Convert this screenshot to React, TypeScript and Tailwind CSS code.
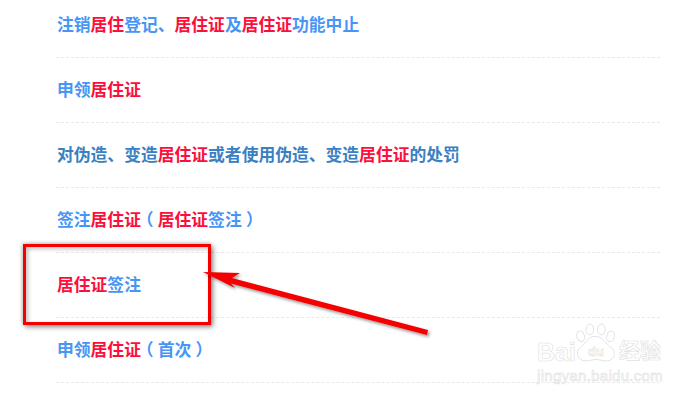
const R = ({ children }: { children: string }) => <span className="text-[#fb0f3c]">{children}</span>;
const Paren = ({ children }: { children: string }) => (
  <span className="inline-block w-[1em] text-center [font-feature-settings:'halt']">{children}</span>
);

const rows = [
  { cls: "text-[#4796f6]", body: <>注销<R>居住</R>登记、<R>居住证</R>及<R>居住证</R>功能中止</> },
  { cls: "text-[#4796f6]", body: <>申领<R>居住证</R></> },
  { cls: "text-[#3a80c2]", body: <>对伪造、变造<R>居住证</R>或者使用伪造、变造<R>居住证</R>的处罚</> },
  { cls: "text-[#4796f6]", body: <>签注<R>居住证</R><Paren>（</Paren><R>居住证</R>签注<Paren>）</Paren></> },
  { cls: "text-[#4796f6]", body: <><R>居住证</R>签注</> },
  { cls: "text-[#4796f6]", body: <>申领<R>居住证</R><Paren>（</Paren>首次<Paren>）</Paren></> },
];

export default function App() {
  return (
    <div className="relative w-[700px] h-[400px] overflow-hidden bg-white font-['Noto_Sans_CJK_SC','Noto_Sans',sans-serif]">
      <ul className="ml-[56px] w-[604px] -mt-[7px]">
        {rows.map((r, i) => (
          <li key={i} className={`pl-px pt-[19px] pb-[21px] border-b border-dashed border-[#e9e9e9] text-[16.8px] leading-6 font-bold ${r.cls}`}>
            {r.body}
          </li>
        ))}
      </ul>

      {/* annotation box */}
      <div className="absolute left-[23px] top-[244px] w-[188px] h-[81px] border-[3px] border-[#f40000] shadow-[2px_2px_5px_rgba(0,0,0,0.45),-1px_-1px_4px_rgba(0,0,0,0.2),inset_2px_2px_4px_rgba(0,0,0,0.25)]" />

      {/* annotation arrow */}
      <svg className="absolute left-0 top-0" width="700" height="400" viewBox="0 0 700 400">
        <defs>
          <filter id="s" x="-10%" y="-30%" width="120%" height="160%">
            <feDropShadow dx="1.5" dy="2" stdDeviation="1.5" floodColor="#000" floodOpacity="0.4" />
          </filter>
        </defs>
        <path
          d="M203 272 L240 273 L232 278 L428 330 L427 335 L231 283.5 L235 288 Z"
          fill="#f40000"
          filter="url(#s)"
        />
      </svg>

      {/* watermark */}
      <div className="absolute left-[537px] top-[323px] flex flex-col text-white [-webkit-text-stroke:0.6px_#e0e0e0]">
        <div className="flex items-end">
          <div className="text-[25px] leading-[39px] h-[39px] pt-[10px] font-bold font-['Liberation_Sans',sans-serif]">Bai</div>
          <div className="grid w-[40px] h-[39px] items-end justify-items-center">
            <svg className="col-start-1 row-start-1" width="40" height="39" viewBox="0 0 52 50" fill="#fff" stroke="#e0e0e0" strokeWidth="1.2">
              <ellipse cx="6" cy="17" rx="5" ry="7" transform="rotate(-15 6 17)" />
              <ellipse cx="18" cy="8" rx="5" ry="7" />
              <ellipse cx="33" cy="8" rx="5" ry="7" />
              <ellipse cx="45" cy="17" rx="5" ry="7" transform="rotate(15 45 17)" />
              <path d="M25 17 C15 17 13 26 6 31 C-2 37 2 49 13 49 C19 49 21 47 26 47 C31 47 33 49 39 49 C50 49 54 37 45 31 C38 26 35 17 25 17 Z" />
            </svg>
            <div className="col-start-1 row-start-1 text-[13px] leading-5 font-bold font-['Liberation_Sans',sans-serif]">du</div>
          </div>
          <div className="ml-[3px] text-[21px] leading-[26px] font-bold">经验</div>
        </div>
        <div className="mt-[6px] text-[15px] tracking-[0.3px] leading-4 font-['Liberation_Sans',sans-serif]">jingyan.baidu.com</div>
      </div>
    </div>
  );
}
